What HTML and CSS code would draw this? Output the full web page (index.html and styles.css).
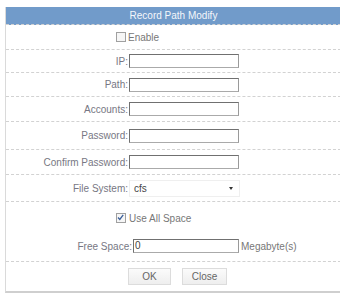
FILE: index.html
```html
<!DOCTYPE html>
<html>
<head>
<meta charset="utf-8">
<link rel="stylesheet" href="styles.css">
</head>
<body>
<div class="dialog">
  <div class="title">Record Path Modify</div>
  <div class="row r-enable">
    <span class="cb"></span><span class="cb-label">Enable</span>
  </div>
  <div class="row r-22">
    <span class="label">IP:</span><span class="input"></span>
  </div>
  <div class="row r-24">
    <span class="label">Path:</span><span class="input"></span>
  </div>
  <div class="row r-25">
    <span class="label">Accounts:</span><span class="input"></span>
  </div>
  <div class="row r-28">
    <span class="label">Password:</span><span class="input"></span>
  </div>
  <div class="row r-25">
    <span class="label">Confirm Password:</span><span class="input"></span>
  </div>
  <div class="row r-27">
    <span class="label">File System:</span>
    <span class="select"><span class="sel-text">cfs</span><span class="arrow"></span></span>
  </div>
  <div class="row r-space">
    <div class="line line-check">
      <span class="cb checked"><svg width="9" height="9" viewBox="0 0 9 9"><path d="M2 4.5 L3.8 6.5 L7.2 1.8" fill="none" stroke="#3b5f9a" stroke-width="1.3"/></svg></span><span class="cb-label">Use All Space</span>
    </div>
    <div class="line line-free">
      <span class="label label-free">Free Space:</span><span class="input input-free">0</span><span class="unit">Megabyte(s)</span>
    </div>
  </div>
  <div class="row r-btn">
    <span class="btn btn-ok">OK</span><span class="btn btn-close">Close</span>
  </div>
</div>
</body>
</html>
```

FILE: styles.css
```css
html, body {
  margin: 0;
  padding: 0;
  background: #fff;
}
body {
  font-family: "Liberation Sans", Arial, sans-serif;
  font-size: 10px;
  color: #777;
}
.dialog {
  margin: 7px 0 0 5px;
  width: 335px;
  border-left: 1px solid #dadada;
  border-bottom: 2px solid #cfcfcf;
}
.title {
  height: 17px;
  line-height: 17px;
  background: #719bca;
  color: #f4f7fb;
  text-align: center;
  border-bottom: 1px dashed #d2d2d2;
}
.row {
  display: flex;
  align-items: center;
  border-bottom: 1px dashed #d2d2d2;
  box-sizing: border-box;
}
.r-enable { height: 25px; padding-left: 110px; }
.r-22 { height: 23px; }
.r-24 { height: 24px; }
.r-25 { height: 25px; }
.r-27 { height: 27px; }
.r-28 { height: 28px; }
.label {
  width: 122px;
  text-align: right;
  flex: none;
  color: #777783;
}
.input {
  width: 108px;
  height: 12px;
  border: 1px solid #707070;
  border-right-color: #9a9a9a;
  border-bottom-color: #aaa;
  background: #fff;
  flex: none;
  margin-left: 1px;
}
.cb {
  width: 8px;
  height: 8px;
  border: 1px solid #a0a0a0;
  background: #f6f6f6;
  flex: none;
  display: inline-flex;
}
.cb svg { display: block; margin: -1px 0 0 -1px; }
.cb-label {
  margin-left: 2px;
}
.select {
  position: relative;
  width: 109px;
  height: 15px;
  margin-left: 1px;
  border: 1px solid #efefef;
  display: flex;
  align-items: center;
}
.sel-text {
  margin-left: 4px;
  color: #444;
}
.arrow {
  position: absolute;
  right: 6px;
  top: 6px;
  width: 0;
  height: 0;
  border-left: 2.5px solid transparent;
  border-right: 2.5px solid transparent;
  border-top: 3px solid #333;
}
.r-space {
  height: 60px;
  flex-direction: column;
  align-items: stretch;
}
.line {
  display: flex;
  align-items: center;
}
.line-check {
  height: 28px;
  padding-left: 110px;
  margin-top: 2px;
}
.line-check .cb-label { margin-left: 3px; }
.line-free {
  height: 28px;
}
.label-free {
  width: 126px;
}
.input-free {
  width: 103px;
  color: #444;
  line-height: 12px;
  padding-left: 1px;
  box-sizing: content-box;
}
.unit {
  margin-left: 2px;
}
.r-btn {
  height: 29px;
  border-bottom: none;
  padding-left: 122px;
}
.btn {
  line-height: 16px;
  border: 1px solid #dcdcdc;
  background: linear-gradient(#fbfbfb, #eeeeee);
  text-align: center;
  color: #666;
  box-sizing: border-box;
  height: 17px;
}
.btn-ok { width: 43px; }
.btn-close { width: 45px; margin-left: 11px; }
```
